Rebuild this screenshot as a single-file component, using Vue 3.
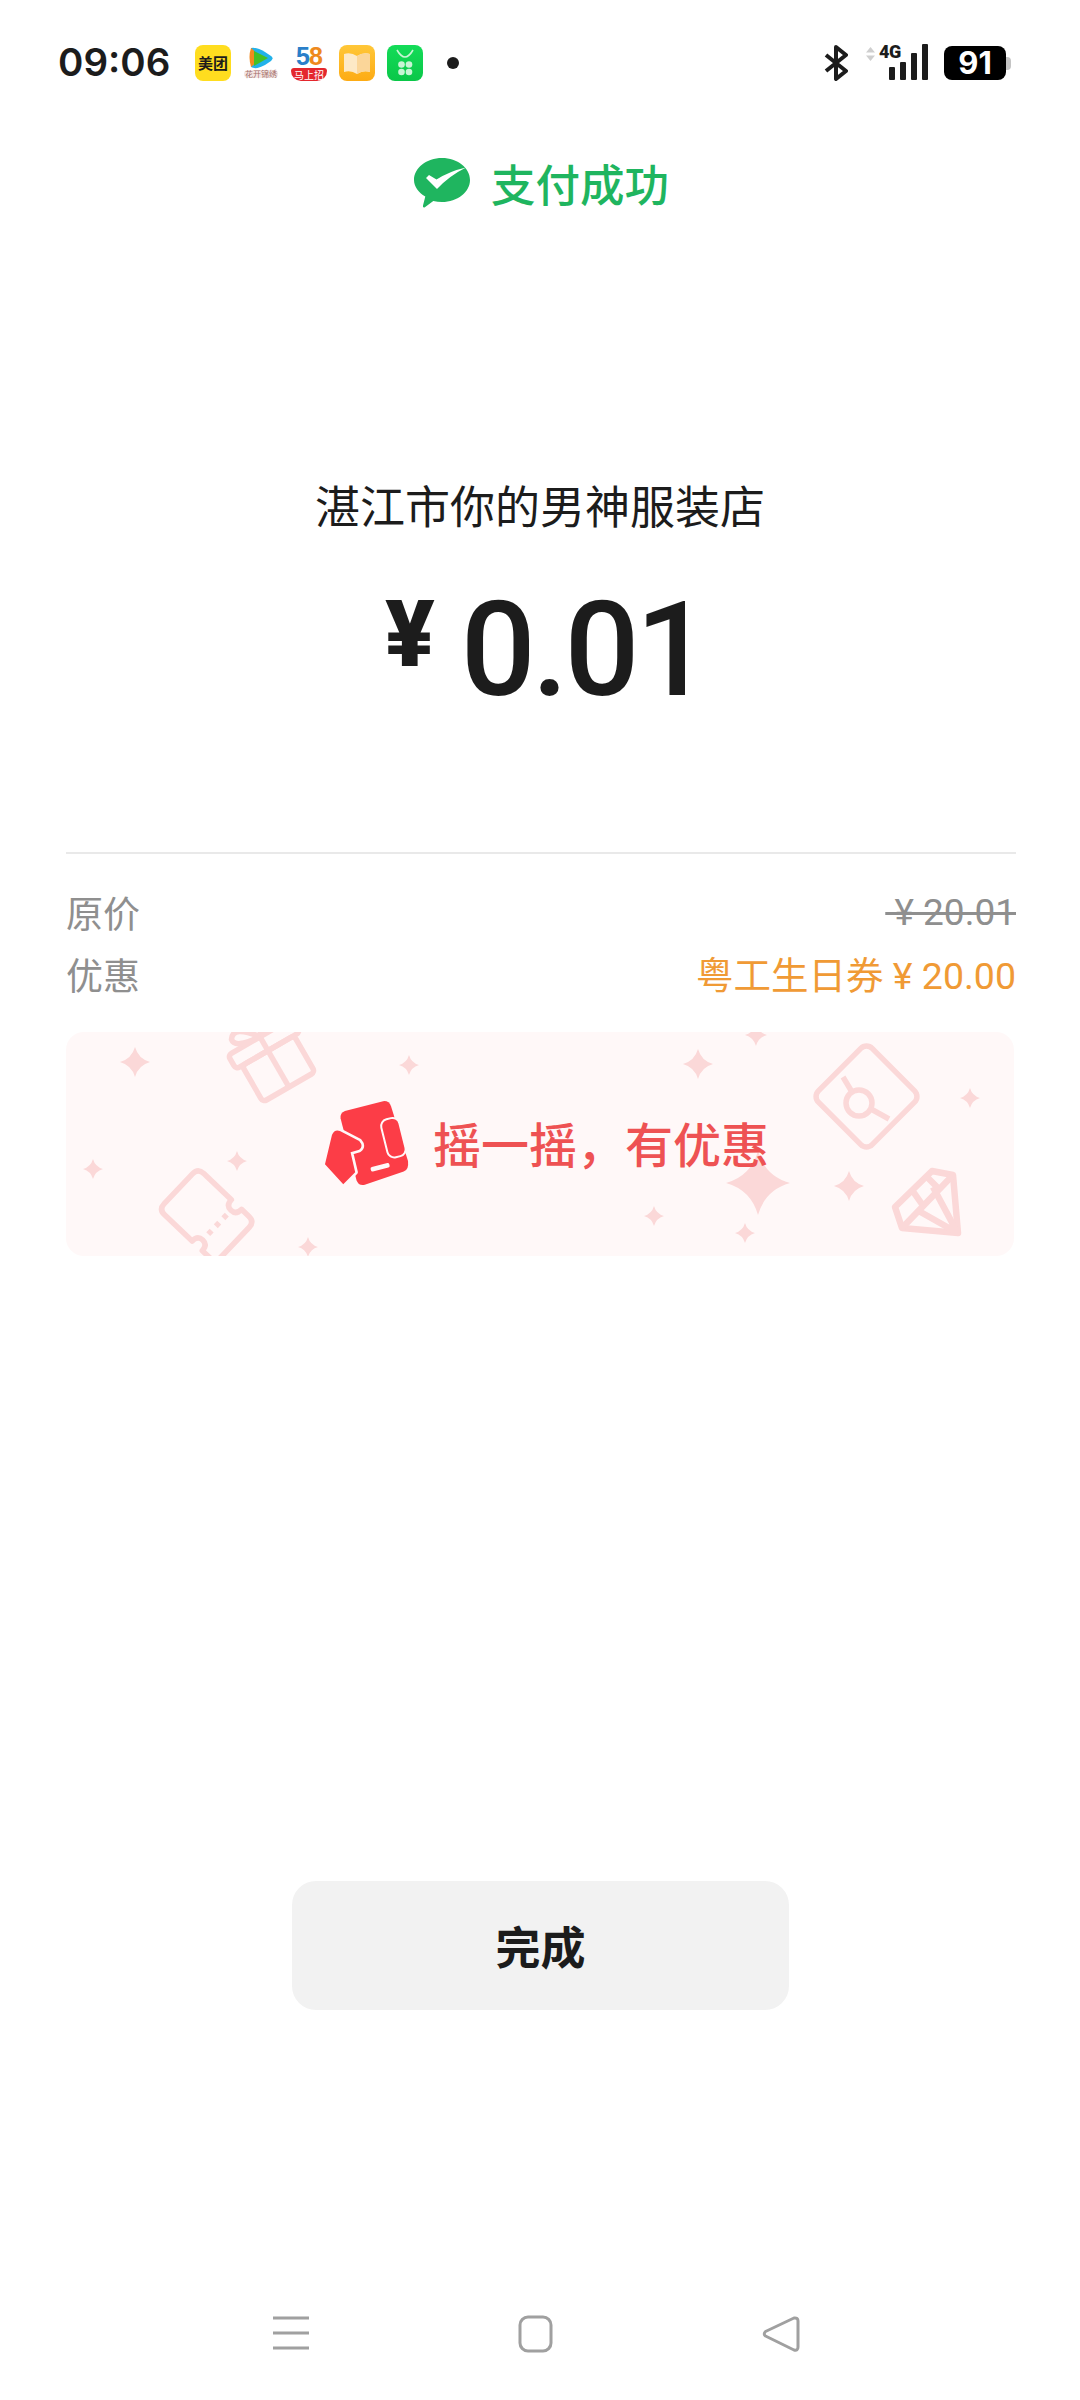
<template>
  <div class="page">
    <!-- 状态栏 -->
    <div class="status-bar">
      <span class="time">09:06</span>
      <div class="app-icons">
        <div class="app meituan"><span>美团</span></div>
        <div class="app video">
          <svg viewBox="0 0 36 36" width="36" height="36">
            <path d="M8 3 Q14 2 22 7 L28 11 Q31 13 28 16 L22 20 Q13 25 8 22 Z" fill="#22b2ea" />
            <path d="M8 3 Q5 12 8 22 Q13 19 13 12 Q13 6 8 3 Z" fill="#f28a1e" />
            <path d="M11 6 L25 13 L11 21 Z" fill="#45c025" />
            <rect x="1" y="25" width="34" height="8" rx="4" fill="#f3e6e4" />
          </svg>
          <span class="video-tag">花开锦绣</span>
        </div>
        <div class="app wuba">
          <span class="wuba-num"><b class="five">5</b><b class="eight">8</b></span>
          <span class="wuba-tag">马上招</span>
        </div>
        <div class="app book">
          <svg viewBox="0 0 36 36" width="36" height="36">
            <path d="M5 9 Q12 7 18 11 Q24 7 31 9 V27 Q24 25 18 29 Q12 25 5 27 Z" fill="#fde9c6" />
            <path d="M18 11 V29 Q24 25 31 27 V9 Q24 7 18 11 Z" fill="#fbd699" />
          </svg>
        </div>
        <div class="app market">
          <svg viewBox="0 0 36 36" width="36" height="36">
            <path d="M10 5 Q18 19 26 5" fill="none" stroke="#c8f5d5" stroke-width="1.6" />
            <circle cx="14.5" cy="19.500" r="3.300" fill="#c8f5d5" />
            <circle cx="22" cy="19.500" r="3.300" fill="#c8f5d5" />
            <circle cx="14.5" cy="27" r="3.300" fill="#c8f5d5" />
            <circle cx="22" cy="27" r="3.300" fill="#c8f5d5" />
          </svg>
        </div>
        <i class="more-dot"></i>
      </div>
      <div class="sys-icons">
        <svg class="bluetooth" viewBox="0 0 24 38" width="24" height="38">
          <path d="M2 11 L22 27 L12 35 V3 L22 11 L2 27" fill="none" stroke="#1c1c1c" stroke-width="4" stroke-linejoin="round" />
        </svg>
        <div class="signal">
          <svg viewBox="0 0 9 14" width="9" height="14" class="arrows">
            <path d="M4.5 0 L9 5.5 H0 Z M4.5 14 L0 8.5 H9 Z" fill="#cfcfcf" />
          </svg>
          <span class="net">4G</span>
          <div class="bars">
            <i v-for="h in barHeights" :key="h" :style="{ height: h + 'px' }"></i>
          </div>
        </div>
        <div class="battery">
          <span class="level">91</span>
          <i class="nub"></i>
        </div>
      </div>
    </div>

    <!-- 支付成功标题 -->
    <div class="result-title">
      <svg viewBox="0 0 56 50" width="56" height="50">
        <path d="M28 0 C43.5 0 56 9.8 56 22 C56 34.2 43.5 44 28 44 C25 44 22 43.6 19.300 42.900 L10.500 49.500 Q8.500 50 9 47.500 L11.300 38.500 C4.500 34.500 0 28.600 0 22 C0 9.800 12.500 0 28 0 Z" fill="#1fb55f" />
        <path d="M12 20 L15 17 L22.500 21.500 Q36 13 52 9.500 Q35 18 23 31 Z" fill="#fff" />
      </svg>
      <span>支付成功</span>
    </div>

    <!-- 金额 -->
    <div class="merchant">湛江市你的男神服装店</div>
    <div class="amount">
      <span class="currency">¥</span>
      <span class="money">0.01</span>
    </div>

    <div class="divider"></div>

    <div class="detail-row">
      <span class="label">原价</span>
      <span class="origin">&nbsp;¥ 20.01</span>
    </div>
    <div class="detail-row second">
      <span class="label">优惠</span>
      <span class="discount">粤工生日券 ¥ 20.00</span>
    </div>

    <!-- 摇一摇 -->
    <div class="shake-banner">
      <svg class="banner-bg" viewBox="0 0 948 224" width="948" height="224">
        <path
          v-for="(s, i) in sparkles"
          :key="i"
          :d="sparklePath(s)"
          fill="#fbd8d8"
        />
        <g fill="none" stroke="#fbd8d8" stroke-width="5.5" stroke-linejoin="round">
          <!-- 礼物 -->
          <g transform="translate(223 55) rotate(-30)">
            <rect x="-30" y="-42" width="60" height="42" rx="4" />
            <rect x="-37" y="-58" width="74" height="16" rx="4" />
            <path d="M0 -58 V0" />
            <path d="M0 -58 Q-18 -82 -26 -70 Q-28 -60 0 -58 M0 -58 Q16 -80 26 -72" />
          </g>
          <!-- 券 -->
          <g transform="translate(132 136) rotate(43.5)">
            <path d="M8 0 H46 Q46 8 53 8 Q60 8 60 0 H70 Q78 0 78 8 V49 Q78 57 70 57 H60 Q60 49 53 49 Q46 49 46 57 H8 Q0 57 0 49 V8 Q0 0 8 0 Z" />
            <path d="M53 14 V44" stroke-dasharray="5 6" />
          </g>
          <!-- 卡片 -->
          <rect x="762.500" y="26.500" width="76" height="76" rx="8" transform="rotate(45 800.500 64.500)" />
          <circle cx="793" cy="71" r="13" />
          <path d="M777 45 L786 60 M805 77 L823 87" />
          <!-- 钻石 -->
          <g stroke-width="6.5">
            <path d="M866 139 L887 143 L892 201 L836 196 L829 175 Z" />
            <path d="M836 196 L887 143 M851 178 L890 200 M867 155 L890 198 M846 158 L858 175 M862 146 L874 158" />
          </g>
        </g>
      </svg>
      <div class="shake-content">
        <svg viewBox="60 20 280 270" width="93" height="90">
          <path d="M135 62 L250 32 Q268 30 274 48 L325 212 Q328 238 312 244 L195 284 Q176 288 170 270 L122 84 Q120 68 135 62 Z" fill="#fc3d47" />
          <rect x="256" y="86" width="50" height="112" rx="18" transform="rotate(-14 281 142)" fill="#fc3d47" stroke="#fff8f8" stroke-width="12" paint-order="stroke" />
          <path d="M75 222 L96 134 Q104 116 120 122 L178 152 Q192 168 178 178 L152 186 L166 246 L130 282 Z" fill="#fc3d47" stroke="#fff8f8" stroke-width="16" stroke-linejoin="round" paint-order="stroke" />
          <rect x="212" y="224" width="58" height="14" rx="5" transform="rotate(-14 241 231)" fill="#fff8f8" />
        </svg>
        <span class="shake-text">摇一摇，有优惠</span>
      </div>
    </div>

    <div class="spacer"></div>

    <button class="done-button">完成</button>

    <!-- 底部导航 -->
    <div class="nav-bar">
      <svg viewBox="0 0 38 36" width="38" height="36">
        <path d="M1 3 H37 M1 18 H37 M1 33 H37" stroke="#a0a0a0" stroke-width="3" fill="none" />
      </svg>
      <svg viewBox="0 0 36 38" width="36" height="38">
        <rect x="2" y="2" width="31" height="34" rx="8" stroke="#a0a0a0" stroke-width="3" fill="none" />
      </svg>
      <svg viewBox="0 0 38 38" width="38" height="38">
        <path d="M3.500 16.500 L32 3 Q36 2.500 36 6 V32 Q36 36 32 35 L3.500 21 Q1 19 3.500 16.500 Z" stroke="#a0a0a0" stroke-width="3" fill="none" stroke-linejoin="round" />
      </svg>
    </div>
  </div>
</template>

<script setup>
const barHeights = [13, 18, 27, 36]

// 背景星星 [x, y, 半径]
const sparkles = [
  [69, 30, 15],
  [343, 33, 10],
  [27, 137, 10],
  [171, 129, 10],
  [242, 215, 10],
  [632, 32, 15],
  [690, 3, 11],
  [692, 151, 32],
  [783, 154, 15],
  [588, 184, 10],
  [679, 201, 10],
  [904, 66, 10]
]

const sparklePath = ([x, y, r]) => {
  const k = r * 0.22
  return `M${x} ${y - r} Q${x + k} ${y - k} ${x + r} ${y} Q${x + k} ${y + k} ${x} ${y + r} Q${x - k} ${y + k} ${x - r} ${y} Q${x - k} ${y - k} ${x} ${y - r} Z`
}
</script>

<style scoped>
.page {
  width: 1080px;
  height: 2400px;
  background: #fff;
  display: flex;
  flex-direction: column;
  font-family: "Noto Sans CJK SC", "Noto Sans", sans-serif;
  color: #1c1c1c;
  overflow: hidden;
}

.status-bar {
  height: 36px;
  margin-top: 45px;
  padding: 0 74px 0 58px;
  display: flex;
  align-items: center;
}

.time {
  width: 137px;
  margin-bottom: 3px;
  font-family: Inter, Roboto, sans-serif;
  font-size: 38.5px;
  font-weight: 600;
  line-height: 36px;
}

.app-icons {
  display: flex;
  align-items: center;
  gap: 12px;
}

.app {
  width: 36px;
  height: 36px;
  border-radius: 8px;
  position: relative;
  flex: none;
}

.meituan {
  background: #ffdd1f;
  display: flex;
  align-items: center;
  justify-content: center;
}

.meituan span {
  font-size: 15px;
  font-weight: 700;
  line-height: 18px;
  white-space: nowrap;
}

.video-tag {
  position: absolute;
  left: 0;
  right: 0;
  bottom: 3px;
  font-size: 8px;
  line-height: 9px;
  color: #a5706a;
  text-align: center;
  white-space: nowrap;
}

.wuba {
  text-align: center;
}

.wuba-num {
  display: block;
  font-family: "Liberation Sans", sans-serif;
  font-size: 25px;
  line-height: 23px;
  letter-spacing: -1px;
}

.five {
  color: #2a7fc9;
}

.eight {
  color: #ee8a1d;
}

.wuba-tag {
  display: block;
  background: #e4272d;
  border-radius: 3px 3px 10px 10px;
  color: #fff;
  font-size: 10px;
  line-height: 13px;
  white-space: nowrap;
}

.book {
  background: linear-gradient(#ffc738, #fdab14);
}

.market {
  background: linear-gradient(#14dc58, #0ac748);
}

.more-dot {
  width: 12px;
  height: 12px;
  margin-left: 12px;
  border-radius: 50%;
  background: #1c1c1c;
}

.sys-icons {
  margin-left: auto;
  display: flex;
  align-items: center;
}

.bluetooth {
  flex: none;
}

.signal {
  width: 61px;
  height: 37px;
  margin: 0 0 3px 18px;
  position: relative;
}

.arrows {
  position: absolute;
  left: 0;
  top: 4px;
}

.net {
  position: absolute;
  left: 13px;
  top: 0;
  font-family: Roboto, sans-serif;
  font-size: 18px;
  font-weight: 900;
  line-height: 18px;
  letter-spacing: -0.5px;
}

.bars {
  position: absolute;
  left: 23px;
  bottom: 0;
  display: flex;
  align-items: flex-end;
  gap: 5px;
}

.bars i {
  width: 6px;
  background: #1c1c1c;
  border-radius: 1px;
}

.battery {
  width: 62px;
  height: 34px;
  margin-left: 17px;
  background: #000;
  border-radius: 8px;
  position: relative;
  display: flex;
  align-items: center;
  justify-content: center;
}

.level {
  font-family: Inter, Roboto, sans-serif;
  font-size: 31px;
  font-weight: 700;
  line-height: 34px;
  color: #fff;
}

.nub {
  position: absolute;
  right: -5px;
  top: 11px;
  width: 5px;
  height: 13px;
  background: #c4c4c4;
  border-radius: 0 4px 4px 0;
}

.result-title {
  margin-top: 77px;
  padding-left: 414px;
  height: 50px;
  display: flex;
  align-items: center;
  gap: 21px;
}

.result-title span {
  font-size: 44.5px;
  font-weight: 500;
  line-height: 50px;
  color: #1fb55f;
}

.merchant {
  margin-top: 267px;
  text-align: center;
  font-size: 45px;
  line-height: 60px;
}

.amount {
  margin-top: 50px;
  padding-left: 385px;
  height: 130px;
  display: flex;
  align-items: flex-start;
  gap: 26px;
}

.currency {
  font-family: Roboto, sans-serif;
  font-size: 92px;
  font-weight: 900;
  line-height: 100px;
}

.money {
  font-family: Roboto, sans-serif;
  font-size: 132px;
  font-weight: 500;
  line-height: 130px;
  letter-spacing: -4px;
}

.divider {
  margin: 137px 64px 0 66px;
  height: 2px;
  background: #e9e9e9;
}

.detail-row {
  margin: 33px 64px 0 66px;
  height: 50px;
  display: flex;
  align-items: center;
  justify-content: space-between;
  font-size: 37px;
}

.detail-row.second {
  margin-top: 12px;
}

.label {
  color: #8f8f8f;
}

.origin {
  color: #8f8f8f;
  font-family: Roboto, "Noto Sans CJK SC", sans-serif;
  text-decoration: line-through;
}

.discount {
  margin-bottom: 4px;
  color: #f09a35;
  font-family: Roboto, "Noto Sans CJK SC", sans-serif;
  font-size: 37.5px;
}

.shake-banner {
  margin: 33px 66px 0;
  width: 948px;
  height: 224px;
  background: #fff8f8;
  border-radius: 18px;
  position: relative;
  overflow: hidden;
  flex: none;
}

.banner-bg {
  position: absolute;
  left: 0;
  top: 0;
}

.shake-content {
  position: relative;
  padding: 65px 0 0 254px;
  display: flex;
  align-items: flex-start;
  gap: 20px;
}

.shake-text {
  font-size: 48px;
  font-weight: 500;
  line-height: 64px;
  margin-top: 13px;
  color: #ee5253;
}

.spacer {
  flex: 1;
}

.done-button {
  width: 497px;
  height: 129px;
  margin: 0 0 0 292px;
  border: none;
  border-radius: 24px;
  background: #f2f2f2;
  color: #1c1c1c;
  font-family: inherit;
  font-size: 45px;
  font-weight: 700;
  flex: none;
}

.nav-bar {
  margin-top: 305px;
  height: 85px;
  padding: 0 280px 0 272px;
  display: flex;
  justify-content: space-between;
  align-items: flex-start;
}
</style>
